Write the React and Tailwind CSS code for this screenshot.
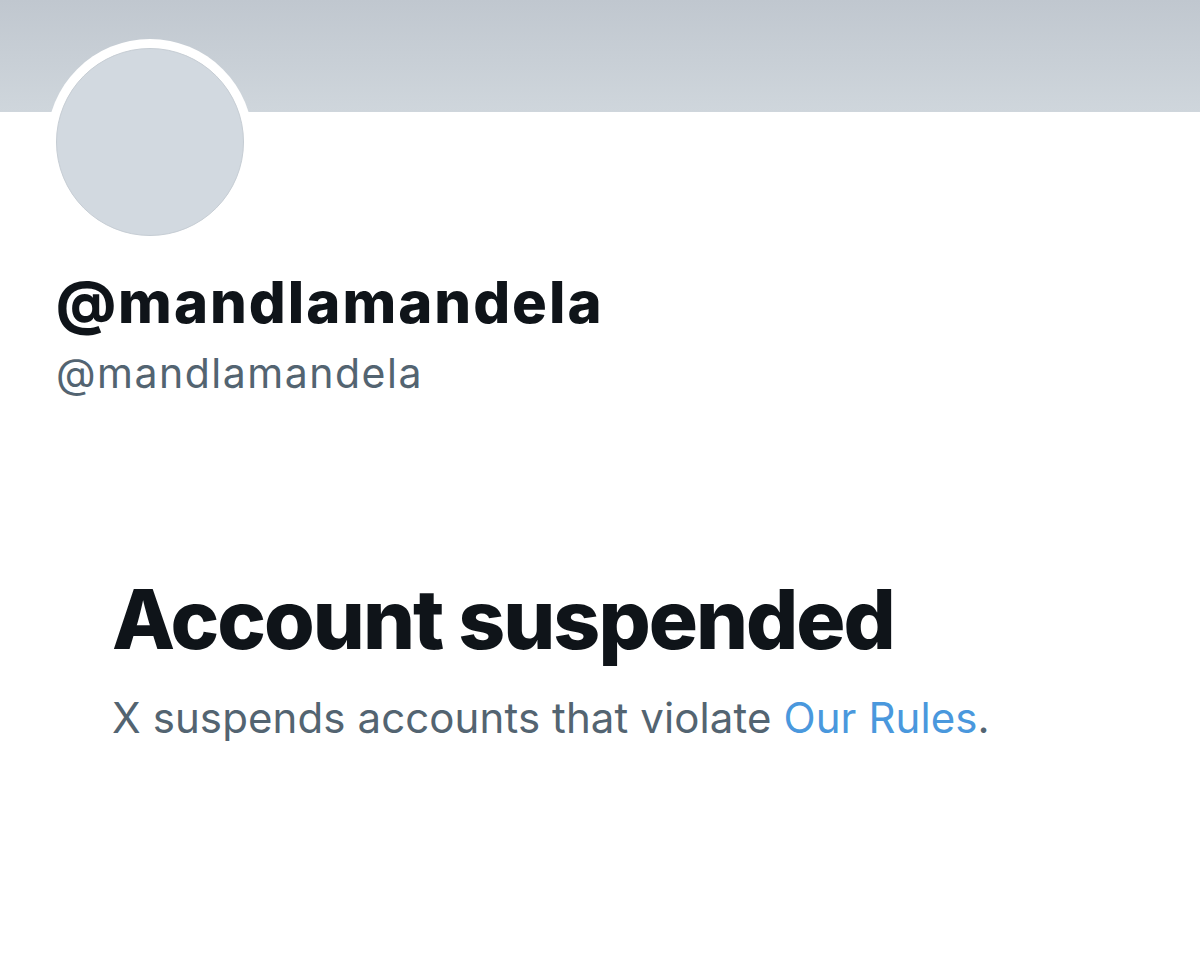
import React from "react";

const font = { fontFamily: "Inter, 'Noto Sans', sans-serif" };

const ProfileBanner = () => (
  <div className="h-[112px] w-full bg-gradient-to-b from-[#c0c7cf] to-[#cfd6dc]" />
);

const Avatar = () => (
  <div className="ml-[47px] -mt-[73px] w-[206px] h-[206px] rounded-full bg-white p-[9px]">
    <div className="w-full h-full rounded-full bg-[#d2d9e0] border border-[#c6cdd4]" />
  </div>
);

export default function App() {
  return (
    <div className="w-[1200px] h-[953px] bg-white overflow-hidden" style={font}>
      <ProfileBanner />
      <Avatar />

      <div className="px-14 mt-[25px]">
        <h1 className="text-[58px] leading-[64px] font-extrabold text-[#0f1419] tracking-[2px]">
          @mandlamandela
        </h1>
        <p className="mt-[15px] text-[41px] leading-[48px] text-[#536471] tracking-[1.5px]">
          @mandlamandela
        </p>
      </div>

      <div className="px-28 mt-[175px]">
        <h2 className="text-[82px] leading-[96px] font-extrabold text-[#0f1419] tracking-[-2px]">
          Account suspended
        </h2>
        <p className="mt-[24px] text-[42px] leading-[52px] text-[#536471] tracking-[0.1px]">
          X suspends accounts that violate{" "}
          <a href="#" className="text-[#4a98dd]">
            Our Rules
          </a>
          .
        </p>
      </div>
    </div>
  );
}
